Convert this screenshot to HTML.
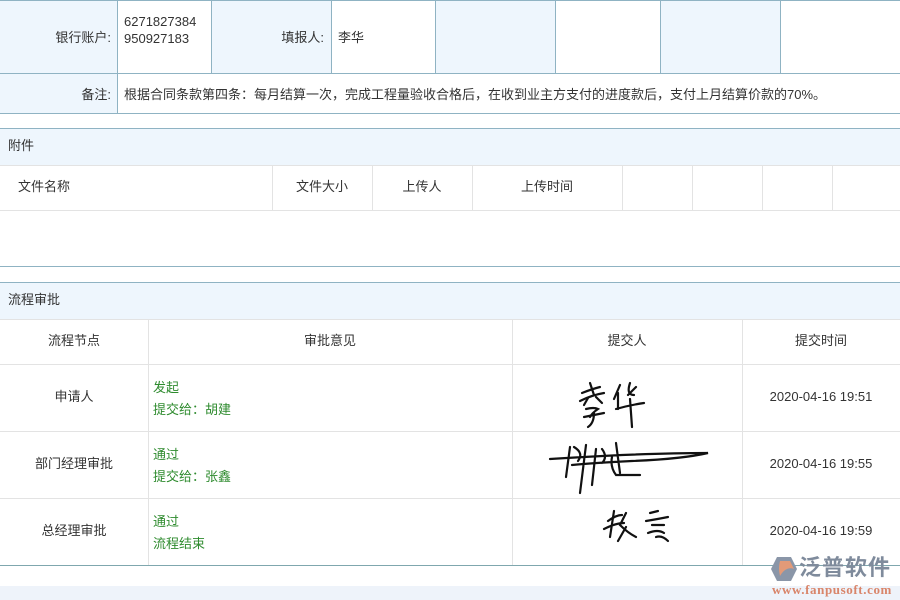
<!DOCTYPE html>
<html><head><meta charset="utf-8"><style>
*{margin:0;padding:0;box-sizing:border-box}
body{width:900px;height:600px;overflow:hidden;background:#fff;font-family:"Liberation Sans","Noto Sans CJK SC",sans-serif;font-size:13px;color:#333;position:relative;line-height:16px}
.a{position:absolute}
.bg{background:#eef6fd}
.hl{position:absolute;left:0;width:900px;height:1px;background:#8fb3c3}
.vl{position:absolute;width:1px;background:#8fb3c3}
.gl{position:absolute;background:#e3e3e3}
.c{position:absolute;text-align:center;line-height:16px}
.g{color:#2e8b2e}
</style></head><body>
<div class="a bg" style="left:0;top:0;width:117px;height:113px"></div>
<div class="a bg" style="left:212px;top:0;width:119px;height:73px"></div>
<div class="a bg" style="left:435px;top:0;width:120px;height:73px"></div>
<div class="a bg" style="left:660px;top:0;width:120px;height:73px"></div>
<div class="hl" style="top:0"></div>
<div class="hl" style="top:73px"></div>
<div class="hl" style="top:113px"></div>
<div class="vl" style="left:117px;top:0;height:113px"></div>
<div class="vl" style="left:211px;top:0;height:73px"></div>
<div class="vl" style="left:331px;top:0;height:73px"></div>
<div class="vl" style="left:435px;top:0;height:73px"></div>
<div class="vl" style="left:555px;top:0;height:73px"></div>
<div class="vl" style="left:660px;top:0;height:73px"></div>
<div class="vl" style="left:780px;top:0;height:73px"></div>
<div class="a" style="left:0;width:111px;top:30px;text-align:right">银行账户:</div>
<div class="a" style="left:124px;top:13px;line-height:17px">6271827384<br>950927183</div>
<div class="a" style="left:212px;width:112px;top:30px;text-align:right">填报人:</div>
<div class="a" style="left:338px;top:30px">李华</div>
<div class="a" style="left:0;width:111px;top:87px;text-align:right">备注:</div>
<div class="a" style="left:124px;top:87px">根据合同条款第四条：每月结算一次，完成工程量验收合格后，在收到业主方支付的进度款后，支付上月结算价款的70%。</div>
<div class="a bg" style="left:0;top:128px;width:900px;height:37px"></div>
<div class="hl" style="top:128px"></div>
<div class="a" style="left:8px;top:138px">附件</div>
<div class="gl" style="left:0;top:165px;width:900px;height:1px"></div>
<div class="gl" style="left:0;top:210px;width:900px;height:1px"></div>
<div class="gl" style="left:272px;top:165px;width:1px;height:45px"></div>
<div class="gl" style="left:372px;top:165px;width:1px;height:45px"></div>
<div class="gl" style="left:472px;top:165px;width:1px;height:45px"></div>
<div class="gl" style="left:622px;top:165px;width:1px;height:45px"></div>
<div class="gl" style="left:692px;top:165px;width:1px;height:45px"></div>
<div class="gl" style="left:762px;top:165px;width:1px;height:45px"></div>
<div class="gl" style="left:832px;top:165px;width:1px;height:45px"></div>
<div class="a" style="left:18px;top:179px">文件名称</div>
<div class="c" style="left:272px;width:100px;top:179px">文件大小</div>
<div class="c" style="left:372px;width:100px;top:179px">上传人</div>
<div class="c" style="left:472px;width:150px;top:179px">上传时间</div>
<div class="hl" style="top:266px"></div>
<div class="a bg" style="left:0;top:282px;width:900px;height:37px"></div>
<div class="hl" style="top:282px"></div>
<div class="a" style="left:8px;top:292px">流程审批</div>
<div class="gl" style="left:0;top:319px;width:900px;height:1px"></div>
<div class="gl" style="left:0;top:364px;width:900px;height:1px"></div>
<div class="gl" style="left:0;top:431px;width:900px;height:1px"></div>
<div class="gl" style="left:0;top:498px;width:900px;height:1px"></div>
<div class="gl" style="left:148px;top:319px;width:1px;height:246px"></div>
<div class="gl" style="left:512px;top:319px;width:1px;height:246px"></div>
<div class="gl" style="left:742px;top:319px;width:1px;height:246px"></div>
<div class="c" style="left:0;width:148px;top:333px">流程节点</div>
<div class="c" style="left:148px;width:364px;top:333px">审批意见</div>
<div class="c" style="left:512px;width:230px;top:333px">提交人</div>
<div class="c" style="left:742px;width:158px;top:333px">提交时间</div>
<div class="c" style="left:0;width:148px;top:389px">申请人</div>
<div class="c" style="left:0;width:148px;top:456px">部门经理审批</div>
<div class="c" style="left:0;width:148px;top:523px">总经理审批</div>
<div class="a g" style="left:153px;top:377px;line-height:22px">发起<br>提交给：胡建</div>
<div class="a g" style="left:153px;top:444px;line-height:22px">通过<br>提交给：张鑫</div>
<div class="a g" style="left:153px;top:511px;line-height:22px">通过<br>流程结束</div>
<div class="c" style="left:742px;width:158px;top:389px">2020-04-16 19:51</div>
<div class="c" style="left:742px;width:158px;top:456px">2020-04-16 19:55</div>
<div class="c" style="left:742px;width:158px;top:523px">2020-04-16 19:59</div>
<svg class="a" style="left:512px;top:365px" width="230" height="200" viewBox="0 0 230 200" fill="none" stroke="#111" stroke-width="2.2" stroke-linecap="round">
<path d="M70 28 Q80 24 88 22 M78 18 L82 30 M68 36 Q80 30 92 28 M76 33 L72 40 M84 32 L90 38 M74 44 Q82 42 86 44 Q80 48 78 52 M72 52 Q82 50 92 48 M82 48 Q82 58 76 62"/>
<path d="M108 20 L102 34 M106 28 L106 44 M118 18 Q114 30 122 30 M124 22 L116 30 M104 44 Q118 40 132 38 M118 34 L120 62"/>
<path d="M38 94 Q70 92 110 90 Q160 88 196 88 Q170 94 120 96 Q80 98 60 100 M58 82 L54 112 M62 82 Q72 88 66 96 M74 80 L68 128 M84 84 L80 120 M90 84 Q96 92 90 98 M100 92 Q98 102 104 110 Q116 110 128 110 M104 78 L108 108"/>
<path d="M96 156 Q104 150 110 150 M92 164 Q104 158 112 158 M102 146 L98 172 M114 148 L108 160 Q116 168 124 172 M114 162 L106 176"/>
<path d="M138 148 L146 146 M134 156 Q146 154 156 152 M140 160 L152 160 M136 168 Q146 164 152 168 M144 172 Q150 170 156 176"/>
</svg>
<div class="hl" style="top:565px;background:#7fa7ae"></div>
<div class="a" style="left:0;top:586px;width:900px;height:14px;background:#eef3fa"></div>
<svg class="a" style="left:770px;top:556px" width="28" height="26" viewBox="0 0 28 26">
<path d="M7 1 H21 L27 13 L21 25 H7 L1 13 Z" fill="#8a96a8"/>
<path d="M10 5 H20 L24 13 Q16 10 10 20 Q8 12 10 5Z" fill="#e29a78"/>
</svg>
<div class="a" style="left:799px;top:555px;font-size:22px;font-weight:bold;color:#7f8b9c;letter-spacing:1px;line-height:26px">泛普软件</div>
<div class="a" style="left:772px;top:583px;font-family:'Liberation Serif',serif;font-size:13px;color:#d9856a;font-weight:bold;line-height:14px;letter-spacing:0.6px">www.fanpusoft.com</div>
</body></html>
